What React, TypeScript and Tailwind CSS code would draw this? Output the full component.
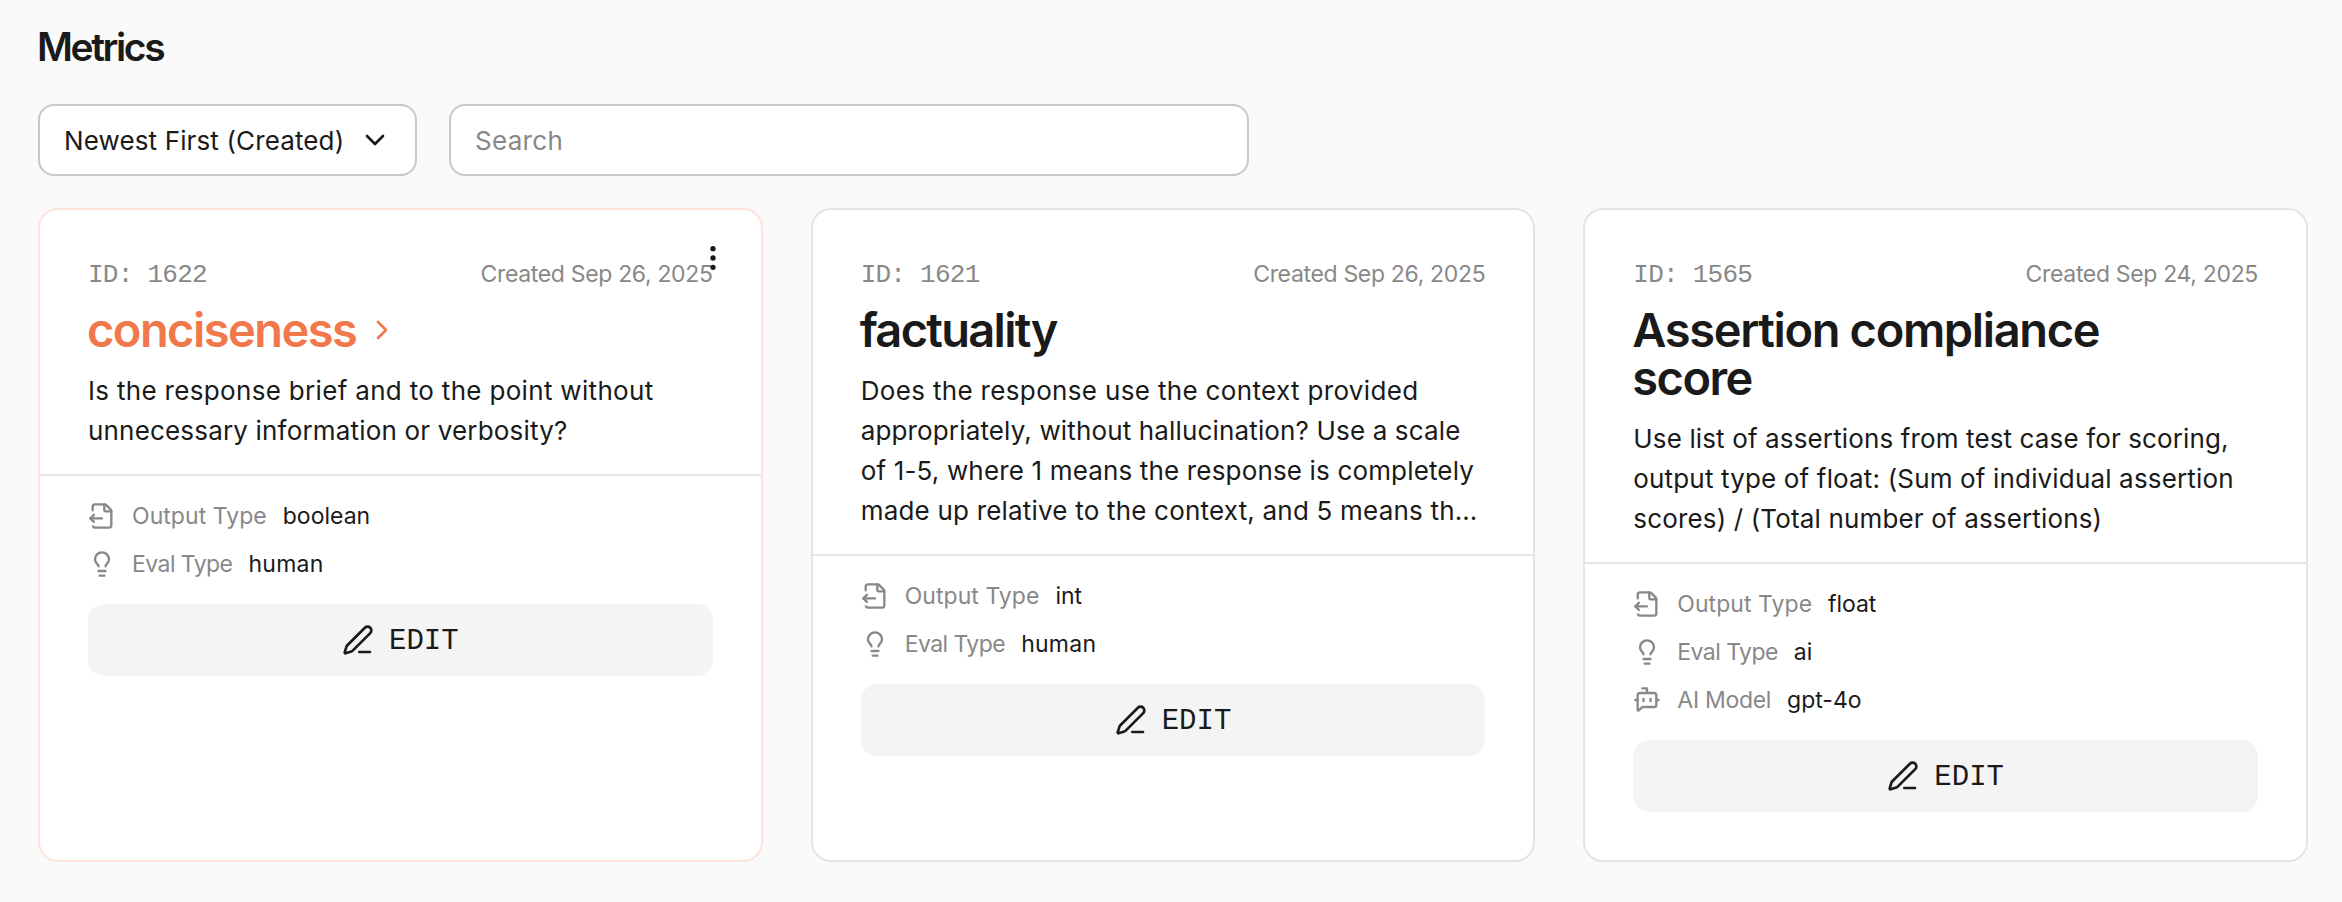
import React from "react";
import { ChevronDown, ChevronRight, EllipsisVertical, FileOutput, Lightbulb, BotMessageSquare, PenLine } from "lucide-react";

type Attr = { kind: "output" | "eval" | "model"; label: string; labelCls: string; value: string; valueCls: string };
type Metric = {
  id: string;
  created: string;
  title: { text: string; cls: string }[];
  lines: { text: string; cls: string }[];
  attrs: Attr[];
  active?: boolean;
};

const output = (value: string, valueCls: string): Attr => ({ kind: "output", label: "Output Type", labelCls: "tracking-[0.05px]", value, valueCls });
const evalType = (value: string, valueCls: string): Attr => ({ kind: "eval", label: "Eval Type", labelCls: "tracking-[-0.55px]", value, valueCls });

const metrics: Metric[] = [
  {
    id: "1622",
    created: "Sep 26, 2025",
    active: true,
    title: [{ text: "conciseness", cls: "tracking-[-1.55px]" }],
    lines: [
      { text: "Is the response brief and to the point without", cls: "tracking-[0.32px]" },
      { text: "unnecessary information or verbosity?", cls: "tracking-[0.18px]" },
    ],
    attrs: [output("boolean", "tracking-[0px]"), evalType("human", "tracking-[0.25px]")],
  },
  {
    id: "1621",
    created: "Sep 26, 2025",
    title: [{ text: "factuality", cls: "tracking-[-1.7px]" }],
    lines: [
      { text: "Does the response use the context provided", cls: "tracking-[0.34px]" },
      { text: "appropriately, without hallucination? Use a scale", cls: "tracking-[0.15px]" },
      { text: "of 1-5, where 1 means the response is completely", cls: "tracking-[0.16px]" },
      { text: "made up relative to the context, and 5 means th…", cls: "tracking-[0.2px]" },
    ],
    attrs: [output("int", "tracking-[0px]"), evalType("human", "tracking-[0.25px]")],
  },
  {
    id: "1565",
    created: "Sep 24, 2025",
    title: [
      { text: "Assertion compliance", cls: "tracking-[-1.36px]" },
      { text: "score", cls: "tracking-[-1.55px]" },
    ],
    lines: [
      { text: "Use list of assertions from test case for scoring,", cls: "tracking-[0.13px]" },
      { text: "output type of float: (Sum of individual assertion", cls: "tracking-[0.16px]" },
      { text: "scores) / (Total number of assertions)", cls: "tracking-[0.15px]" },
    ],
    attrs: [
      output("float", "tracking-[-0.1px]"),
      evalType("ai", "tracking-[0px]"),
      { kind: "model", label: "AI Model", labelCls: "tracking-[-0.3px]", value: "gpt-4o", valueCls: "tracking-[0px]" },
    ],
  },
];

const icons = { output: FileOutput, eval: Lightbulb, model: BotMessageSquare };

function Card({ m }: { m: Metric }) {
  return (
    <article className={`relative flex flex-col rounded-[20px] border-2 bg-white ${m.active ? "border-[#fde3da]" : "border-[#e4e4e4]"}`}>
      {m.active && (
        <button className="absolute top-[32px] right-[32px]" aria-label="Menu">
          <EllipsisVertical size={32} strokeWidth={2} />
        </button>
      )}
      <div className="border-b-2 border-[#e4e4e4] px-12 pt-12 pb-[23px]">
        <div className="flex h-8 items-baseline justify-between leading-[32px] text-[#888]">
          <span className="font-['Liberation_Mono',monospace] text-[26px] tracking-[-0.75px]">ID: {m.id}</span>
          <span className="text-[23px] tracking-[-0.33px]">Created {m.created}</span>
        </div>
        <h2 className={`mt-4 -ml-px flex items-center text-[47px] leading-[48px] font-semibold ${m.active ? "text-[#f1784b]" : ""}`}>
          <span>
            {m.title.map((t) => (
              <span key={t.text} className="block whitespace-nowrap"><span className={t.cls}>{t.text}</span></span>
            ))}
          </span>
          {m.active && <ChevronRight className="ml-[10px]" size={32} strokeWidth={2} />}
        </h2>
        <p className="mt-[17px] text-[26px] leading-[40px]">
          {m.lines.map((l) => (
            <span key={l.text} className="block whitespace-nowrap"><span className={l.cls}>{l.text}</span></span>
          ))}
        </p>
      </div>
      <div className="px-12 pt-4">
        {m.attrs.map((a) => {
          const Icon = icons[a.kind];
          return (
            <div key={a.label} className="flex h-12 items-center text-[23px]">
              <Icon className="mr-4 text-[#888]" size={28} strokeWidth={2} />
              <span className={`text-[#888] ${a.labelCls}`}>{a.label}</span>
              <span className={`ml-4 ${a.valueCls}`}>{a.value}</span>
            </div>
          );
        })}
        <button className="mt-4 flex h-[72px] w-full items-center justify-center gap-[15px] rounded-2xl bg-[#f4f4f4] font-['Liberation_Mono',monospace] text-[29px]">
          <PenLine size={32} strokeWidth={2} />
          <span className="pt-[4px]">EDIT</span>
        </button>
      </div>
    </article>
  );
}

export default function App() {
  return (
    <main className="h-[902px] w-[2342px] overflow-hidden bg-[#fafafa] px-[38px] font-['Inter',sans-serif] text-[#1a1a1a]">
      <h1 className="-ml-px flex h-[104px] items-center pb-[9px] text-[39px] font-semibold tracking-[-2.4px]">Metrics</h1>
      <div className="flex gap-8">
        <button className="flex h-[72px] w-[379px] items-center justify-between rounded-2xl border-2 border-[#c8c8c8] bg-white px-6 text-[26px]">
          <span className="tracking-[0.13px]">Newest First (Created)</span>
          <ChevronDown size={32} strokeWidth={2} />
        </button>
        <div className="flex h-[72px] w-[800px] items-center rounded-2xl border-2 border-[#c8c8c8] bg-white px-6 text-[26px] tracking-[0.3px] text-[#888]">Search</div>
      </div>
      <section className="mt-8 grid h-[654px] w-[2270px] grid-cols-3 gap-12">
        {metrics.map((m) => (
          <Card key={m.id} m={m} />
        ))}
      </section>
    </main>
  );
}
